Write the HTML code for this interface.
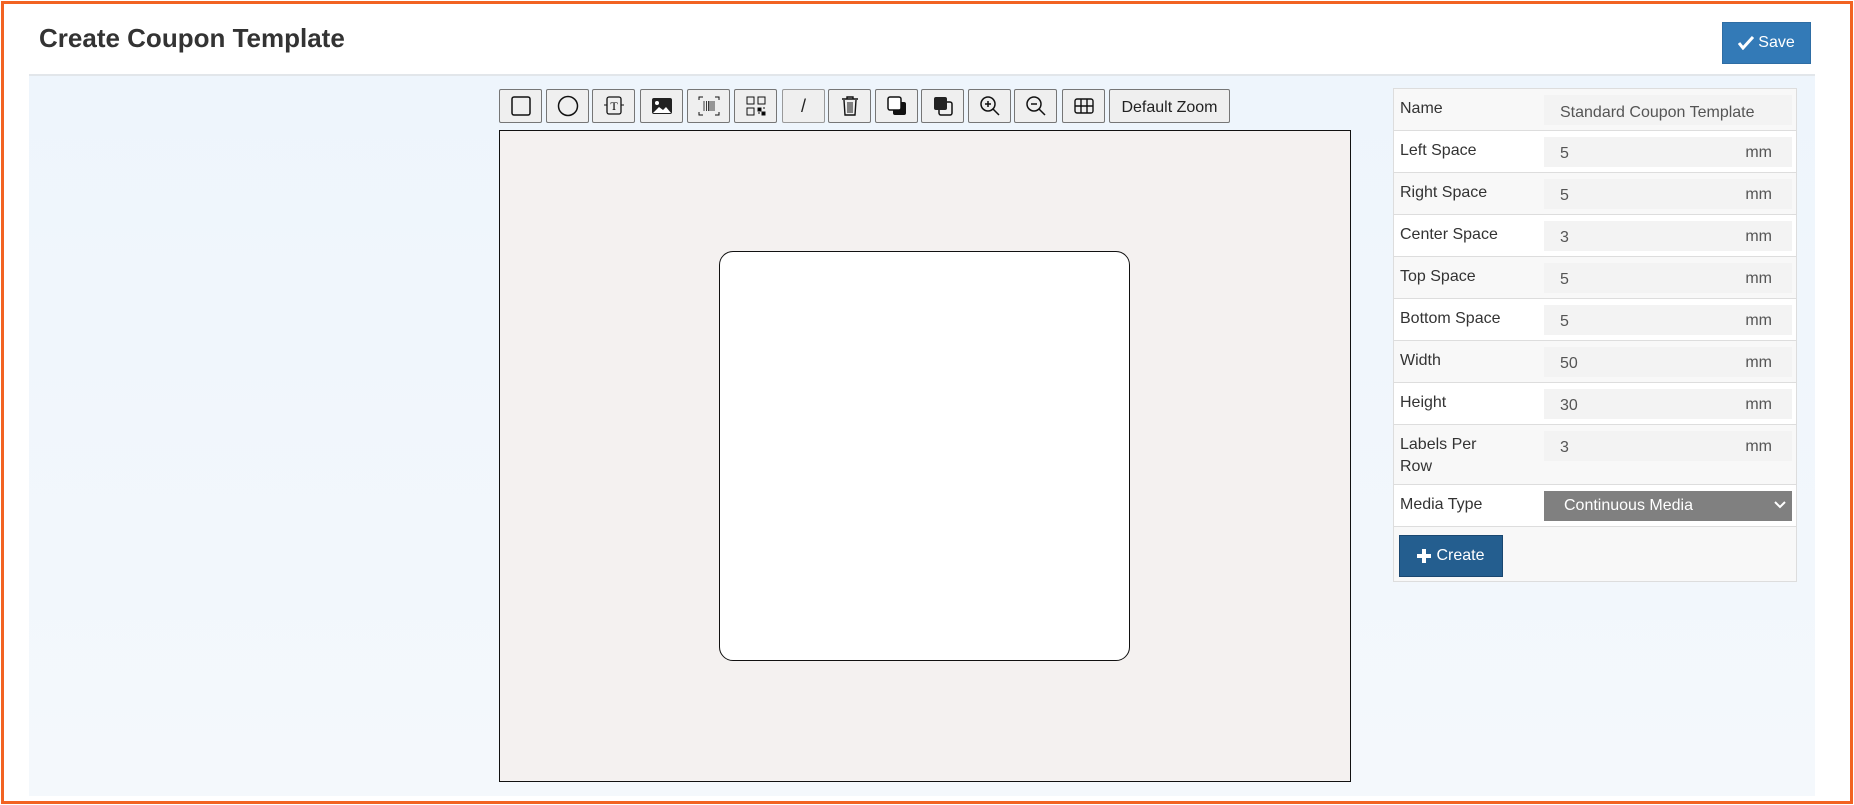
<!DOCTYPE html>
<html><head><meta charset="utf-8"><style>
*{box-sizing:border-box;margin:0;padding:0}
body{width:1854px;height:805px;background:#fff;font-family:"Liberation Sans",sans-serif;position:relative;overflow:hidden}
.frame{position:absolute;left:1px;top:1px;width:1852px;height:803px;border:3px solid #f26322}
.title{position:absolute;left:39px;top:23px;font-size:26px;font-weight:bold;color:#333}
.save{position:absolute;left:1722px;top:22px;width:89px;height:42px;background:#337ab7;border:1px solid #2e6da4;color:#fff;font-size:16px;display:flex;align-items:center;justify-content:center;gap:4px}
.content{position:absolute;left:29px;top:74px;width:1786px;height:722px;border-top:2px solid #e2e6ea;background:linear-gradient(#eef5fc,#f4f8fc)}
.btn{position:absolute;top:89px;width:43px;height:34px;background:#efefef;border:1px solid #767676;border-radius:2px;display:flex;align-items:center;justify-content:center}
.canvas{position:absolute;left:499px;top:130px;width:852px;height:652px;background:#f4f1f0;border:1px solid #111}
.inner{position:absolute;left:719px;top:251px;width:411px;height:410px;background:#fff;border:1px solid #111;border-radius:14px}
.panel{position:absolute;left:1393px;top:88px;width:404px;height:494px;border:1px solid #ddd;background:#f8f8f8}
.row{position:relative;border-bottom:1px solid #ddd;height:42px;font-size:16px;color:#333}
.row .l{position:absolute;left:6px;top:9px;line-height:22px}
.row .in{position:absolute;left:150px;top:6px;width:248px;height:30px;background:#f3f3f3;color:#555;padding:8px 0 0 16px;line-height:18px}
.row .in span{position:absolute;right:20px;top:7px}
.w{background:#fff}
</style></head><body>
<div class="frame"></div>
<div class="title">Create Coupon Template</div>
<div class="save"><svg width="16" height="14" viewBox="0 0 16 14"><path d="M1 7l4 5 10-11" stroke="#fff" stroke-width="3" fill="none"/></svg>Save</div>
<div class="content"></div>

<div class="btn" style="left:499px"><svg width="20" height="20"><rect x="1" y="1" width="18" height="18" rx="2" fill="none" stroke="#111" stroke-width="1.5"/></svg></div>
<div class="btn" style="left:546px"><svg width="22" height="22"><circle cx="11" cy="11" r="9.5" fill="none" stroke="#111" stroke-width="1.5"/></svg></div>
<div class="btn" style="left:592px"><svg width="22" height="22"><rect x="4" y="2" width="14" height="17" rx="2" fill="none" stroke="#111" stroke-width="1.3"/><text x="11" y="15" font-size="12" text-anchor="middle" font-family="Liberation Serif">T</text><path d="M1 10h3M18 10h3" stroke="#111"/></svg></div>
<div class="btn" style="left:640px"><svg width="22" height="20"><rect x="1" y="2" width="20" height="16" rx="2" fill="#222"/><circle cx="6" cy="7" r="2" fill="#fff"/><path d="M2 17l6-6 4 3 3-3 5 6z" fill="#fff"/></svg></div>
<div class="btn" style="left:687px"><svg width="22" height="22"><path d="M1 5V2h4M17 2h4v3M1 17v3h4M17 20h4v-3" stroke="#111" fill="none"/><path d="M6 6v10M8.5 6v10M10.5 6v10M12 6v10M14 6v10M16 6v10" stroke="#111" stroke-width="0.8"/></svg></div>
<div class="btn" style="left:734px"><svg width="22" height="22"><rect x="2" y="2" width="7" height="7" fill="none" stroke="#111"/><rect x="13" y="2" width="7" height="7" fill="none" stroke="#111"/><rect x="2" y="13" width="7" height="7" fill="none" stroke="#111"/><path d="M13 13h3v3h-3zM17 17h3v3h-3zM13 18h2M18 13h2" stroke="#111"/></svg></div>
<div class="btn" style="left:782px;border-color:#999"><span style="font-size:18px;color:#222">/</span></div>
<div class="btn" style="left:828px"><svg width="20" height="22"><path d="M2 4h16M7 4V2h6v2M4 5l1 15h10l1-15" stroke="#111" fill="none" stroke-width="1.4"/><path d="M8 7v11M10 7v11M12 7v11" stroke="#111"/></svg></div>
<div class="btn" style="left:875px"><svg width="22" height="22"><rect x="7" y="7" width="13" height="13" rx="2" fill="#111"/><rect x="2" y="2" width="13" height="13" rx="2" fill="#fff" stroke="#111" stroke-width="1.5"/></svg></div>
<div class="btn" style="left:921px"><svg width="22" height="22"><rect x="7" y="7" width="13" height="13" rx="2" fill="none" stroke="#111" stroke-width="1.5"/><rect x="2" y="2" width="13" height="13" rx="2" fill="#222"/></svg></div>
<div class="btn" style="left:968px"><svg width="22" height="22"><circle cx="9" cy="9" r="7" fill="none" stroke="#111" stroke-width="1.5"/><path d="M14 14l6 6M6 9h6M9 6v6" stroke="#111" stroke-width="1.5"/></svg></div>
<div class="btn" style="left:1014px"><svg width="22" height="22"><circle cx="9" cy="9" r="7" fill="none" stroke="#111" stroke-width="1.5"/><path d="M14 14l6 6M6 9h6" stroke="#111" stroke-width="1.5"/></svg></div>
<div class="btn" style="left:1062px"><svg width="20" height="16"><rect x="1" y="1" width="18" height="14" rx="2" fill="none" stroke="#111" stroke-width="1.4"/><path d="M1 8h18M7 1v14M13 1v14" stroke="#111" stroke-width="1.4"/></svg></div>
<div class="btn" style="left:1109px;width:121px;font-size:16px;color:#222;padding-top:4px">Default Zoom</div>

<div class="canvas"></div>
<div class="inner"></div>

<div class="panel">
<div class="row"><div class="l">Name</div><div class="in" style="background:#f3f3f3;padding-top:9px">Standard Coupon Template</div></div>
<div class="row w"><div class="l">Left Space</div><div class="in">5<span>mm</span></div></div>
<div class="row"><div class="l">Right Space</div><div class="in">5<span>mm</span></div></div>
<div class="row w"><div class="l">Center Space</div><div class="in">3<span>mm</span></div></div>
<div class="row"><div class="l">Top Space</div><div class="in">5<span>mm</span></div></div>
<div class="row w"><div class="l">Bottom Space</div><div class="in">5<span>mm</span></div></div>
<div class="row"><div class="l">Width</div><div class="in">50<span>mm</span></div></div>
<div class="row w"><div class="l">Height</div><div class="in">30<span>mm</span></div></div>
<div class="row" style="height:60px"><div class="l" style="width:110px">Labels Per Row</div><div class="in">3<span>mm</span></div></div>
<div class="row w"><div class="l">Media Type</div><div class="in" style="background:#808080;color:#fff;padding:6px 0 0 20px">Continuous Media<svg style="position:absolute;right:6px;top:10px" width="12" height="8"><path d="M1 1l5 5 5-5" stroke="#fff" stroke-width="2" fill="none"/></svg></div></div>
<div style="position:absolute;left:5px;top:446px;width:104px;height:42px;background:#245e8f;border:1px solid #1a4770;color:#fff;font-size:16px;display:flex;align-items:center;justify-content:center;gap:5px"><svg width="14" height="14"><path d="M7 0v14M0 7h14" stroke="#fff" stroke-width="4"/></svg>Create</div>
</div>
</body></html>
